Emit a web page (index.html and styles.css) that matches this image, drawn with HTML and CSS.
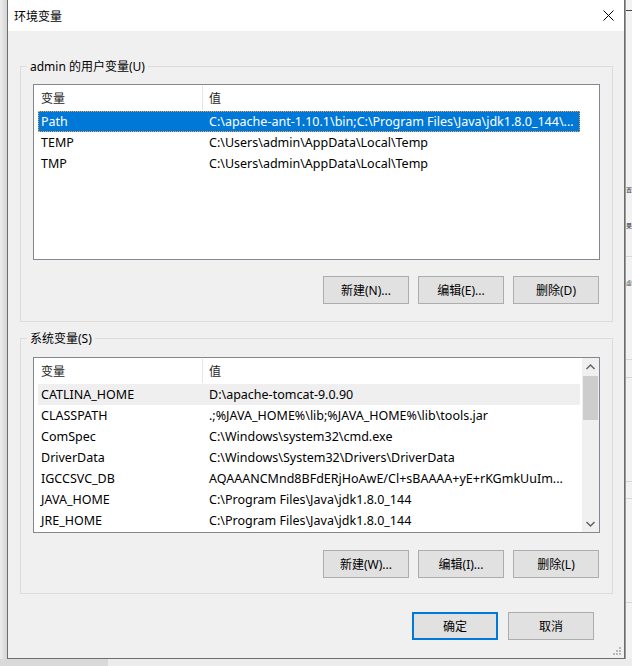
FILE: index.html
```html
<!DOCTYPE html>
<html>
<head>
	<meta charset="UTF-8">
	<title>环境变量</title>
	<link rel="stylesheet" href="styles.css">
</head>
<body>
	<div id="desk">
		<div id="shade"></div>
		<div id="win">
			<div id="titlebar">
				<span class="title">环境变量</span>
				<span id="close">
					<svg width="11" height="11" viewBox="0 0 11 11"><path d="M0.5 0.5 L10.5 10.5 M10.5 0.5 L0.5 10.5" stroke="#000" stroke-width="1" fill="none"/></svg>
				</span>
			</div>
			<div id="content">
				<div class="group" id="user_group">
					<span class="legend">admin 的用户变量(U)</span>
					<div class="list">
						<div class="rows">
							<div class="head">
								<span class="col1">变量</span>
								<span class="col2">值</span>
							</div>
							<div class="row selected">
								<span class="col1">Path</span>
								<span class="col2">C:\apache-ant-1.10.1\bin;C:\Program Files\Java\jdk1.8.0_144\...</span>
							</div>
							<div class="row">
								<span class="col1">TEMP</span>
								<span class="col2">C:\Users\admin\AppData\Local\Temp</span>
							</div>
							<div class="row">
								<span class="col1">TMP</span>
								<span class="col2">C:\Users\admin\AppData\Local\Temp</span>
							</div>
						</div>
					</div>
					<div class="btns">
						<span class="btn">新建(N)...</span>
						<span class="btn">编辑(E)...</span>
						<span class="btn">删除(D)</span>
					</div>
				</div>

				<div class="group" id="sys_group">
					<span class="legend">系统变量(S)</span>
					<div class="list">
						<div class="rows">
							<div class="head">
								<span class="col1">变量</span>
								<span class="col2">值</span>
							</div>
							<div class="row hover">
								<span class="col1">CATLINA_HOME</span>
								<span class="col2">D:\apache-tomcat-9.0.90</span>
							</div>
							<div class="row">
								<span class="col1">CLASSPATH</span>
								<span class="col2">.;%JAVA_HOME%\lib;%JAVA_HOME%\lib\tools.jar</span>
							</div>
							<div class="row">
								<span class="col1">ComSpec</span>
								<span class="col2">C:\Windows\system32\cmd.exe</span>
							</div>
							<div class="row">
								<span class="col1">DriverData</span>
								<span class="col2">C:\Windows\System32\Drivers\DriverData</span>
							</div>
							<div class="row">
								<span class="col1">IGCCSVC_DB</span>
								<span class="col2">AQAAANCMnd8BFdERjHoAwE/Cl+sBAAAA+yE+rKGmkUuIm...</span>
							</div>
							<div class="row">
								<span class="col1">JAVA_HOME</span>
								<span class="col2">C:\Program Files\Java\jdk1.8.0_144</span>
							</div>
							<div class="row">
								<span class="col1">JRE_HOME</span>
								<span class="col2">C:\Program Files\Java\jdk1.8.0_144</span>
							</div>
						</div>
						<div class="scrollbar">
							<span class="arrow">
								<svg width="9" height="6" viewBox="0 0 9 6"><path d="M0.5 5 L4.5 1 L8.5 5" stroke="#606060" stroke-width="1.4" fill="none"/></svg>
							</span>
							<div class="track">
								<div class="thumb"></div>
							</div>
							<span class="arrow">
								<svg width="9" height="6" viewBox="0 0 9 6"><path d="M0.5 1 L4.5 5 L8.5 1" stroke="#606060" stroke-width="1.4" fill="none"/></svg>
							</span>
						</div>
					</div>
					<div class="btns">
						<span class="btn">新建(W)...</span>
						<span class="btn">编辑(I)...</span>
						<span class="btn">删除(L)</span>
					</div>
				</div>

				<div class="btns" id="dlg_btns">
					<span class="btn default">确定</span>
					<span class="btn">取消</span>
				</div>
			</div>
			<span id="grip">
				<svg width="8" height="8" viewBox="0 0 8 8" fill="#b8b8b8"><rect x="6" y="0" width="2" height="2"/><rect x="3" y="3" width="2" height="2"/><rect x="6" y="3" width="2" height="2"/><rect x="0" y="6" width="2" height="2"/><rect x="3" y="6" width="2" height="2"/><rect x="6" y="6" width="2" height="2"/></svg>
			</span>
		</div>
		<div id="behind">
			<div class="bline" id="b1"></div>
			<span class="bchar" id="c1">置</span>
			<span class="bchar" id="c2">果</span>
			<div class="bline" id="b2"></div>
			<span class="bchar" id="c3">虚</span>
			<div class="bline" id="b3"></div>
			<div class="bline" id="b4"></div>
			<div class="bline" id="b5"></div>
			<div class="bline" id="b6"></div>
			<div class="bline" id="b7"></div>
		</div>
	</div>
	<div id="floor"></div>
</body>
</html>
```

FILE: styles.css
```css
*{
	margin: 0;
	padding: 0;
	box-sizing: border-box;
}
body{
	width: 632px;
	height: 666px;
	overflow: hidden;
	background: #e8e8e8;
	font-family: "Noto Sans", "Noto Sans CJK SC", sans-serif;
	font-size: 12px;
	color: #000;
}
#desk{
	display: flex;
	height: 659px;
}
#shade{
	width: 7px;
	background: linear-gradient(to right, #ececec, #d4d4d4);
}
#win{
	width: 618px;
	height: 659px;
	background: #f0f0f0;
	border: 1px solid #6d6d6d;
	border-top: none;
	display: flex;
	flex-direction: column;
	position: relative;
}
#titlebar{
	height: 31px;
	background: #fff;
	display: flex;
	align-items: center;
	justify-content: space-between;
	padding: 0 10px 0 6px;
}
#close{
	display: flex;
}
#content{
	padding: 35px 11px 0 12px;
}
.group{
	position: relative;
	border: 1px solid #dcdcdc;
	padding: 17px 12px 17px 12px;
}
#sys_group{
	margin-top: 16px;
	padding-top: 18px;
	padding-bottom: 15px;
}
.legend{
	position: absolute;
	top: -9px;
	left: 6px;
	padding: 0 3px;
	background: #f0f0f0;
	line-height: 18px;
}
.list{
	height: 176px;
	background: #fff;
	border: 1px solid #828790;
	display: flex;
	overflow: hidden;
}
.rows{
	width: 546px;
	padding-left: 4px;
}
.head{
	height: 26px;
	display: flex;
	align-items: center;
	color: #1e1e1e;
}
.head .col1{
	border-right: 1px solid #e5e5e5;
	height: 24px;
	margin-bottom: 1px;
	display: flex;
	align-items: center;
}
.row{
	height: 21px;
	display: flex;
	align-items: center;
	white-space: nowrap;
	font-size: 12.5px;
}
.col1{
	width: 165px;
	padding-left: 3px;
	flex: none;
}
.col2{
	width: 377px;
	padding-left: 6px;
	overflow: hidden;
}
.head .col2{
	padding-left: 6px;
}
.selected{
	background: #0078d7;
	color: #fff;
	border: 1px dotted #f5a445;
}
.selected .col1{
	padding-left: 2px;
	width: 164px;
}
.hover{
	background: #efefef;
}
.scrollbar{
	width: 17px;
	margin-left: auto;
	background: #f0f0f0;
	display: flex;
	flex-direction: column;
}
.arrow{
	height: 17px;
	display: flex;
	align-items: center;
	justify-content: center;
}
.track{
	flex: 1;
	padding: 1px 1px 0 1px;
}
.thumb{
	height: 44px;
	background: #cdcdcd;
}
.btns{
	display: flex;
	justify-content: flex-end;
	gap: 9px;
	margin-top: 16px;
	padding-right: 1px;
}
#sys_group .btns{
	margin-top: 17px;
}
.btn{
	width: 86px;
	height: 28px;
	background: #e1e1e1;
	border: 1px solid #adadad;
	display: flex;
	align-items: center;
	justify-content: center;
}
#dlg_btns{
	margin-top: 18px;
	gap: 10px;
	padding-right: 19px;
}
.btn.default{
	border: 2px solid #0078d7;
}
#grip{
	position: absolute;
	right: 3px;
	bottom: 3px;
	display: flex;
}
#behind{
	flex: 1;
	position: relative;
	overflow: hidden;
	background: #f2f2f2;
	border-left: 1px solid #9a9a9a;
}
.bline{
	position: absolute;
	left: 0;
	right: 0;
	height: 1px;
	background: #d6d6d6;
}
#b1{ top: 10px; background: #444; }
#b2{ top: 256px; }
#b3{ top: 359px; }
#b4{ top: 377px; }
#b5{ top: 481px; }
#b6{ top: 498px; }
#b7{ top: 602px; }
.bchar{
	position: absolute;
	left: 0;
	font-size: 6px;
	line-height: 8px;
	color: #333;
}
#c1{ top: 186px; }
#c2{ top: 222px; }
#c3{ top: 279px; }
#floor{
	height: 7px;
	background: linear-gradient(to right, #d9d9d9 0, #d9d9d9 108px, #ececec 108px);
}
```
